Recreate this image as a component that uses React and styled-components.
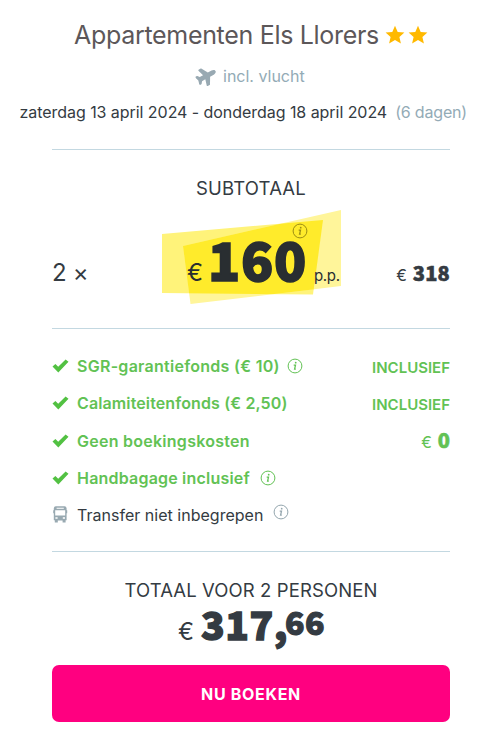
import React from "react";
import styled, { createGlobalStyle } from "styled-components";
import { FaPlane } from "react-icons/fa";

const GlobalStyle = createGlobalStyle`
  * { box-sizing: border-box; }
  body {
    margin: 0;
    background: #fff;
    color: #343b42;
    font-family: Inter, "Liberation Sans", sans-serif;
    font-size: 16px;
  }
`;

const Page = styled.main`
  width: 500px;
  height: 738px;
  overflow: hidden;
  display: flex;
  flex-direction: column;
`;

const Header = styled.header`
  height: 149px;
  padding-top: 20px;
  white-space: nowrap;
`;

const Title = styled.h1`
  display: flex;
  align-items: center;
  height: 30px;
  margin: 0 0 0 74px;
  color: #5c5759;
  font-size: 25px;
  font-weight: 400;
  line-height: 30px;
  letter-spacing: -0.31px;
`;

const Stars = styled.span`
  display: flex;
  gap: 3px;
  margin-left: 6px;
`;

const Flight = styled.div`
  display: flex;
  align-items: center;
  gap: 6px;
  height: 20px;
  margin: 16px 0 0 196px;
  color: #93abb6;
  line-height: 20px;
`;

const PlaneIcon = styled(FaPlane)`
  width: 21px;
  height: 20px;
  color: #98a9b2;
  transform: rotate(-29deg);
`;

const Dates = styled.div`
  display: flex;
  height: 20px;
  margin: 16px 0 0 19.5px;
  line-height: 20px;
  letter-spacing: -0.05px;
`;

const Days = styled.span`
  margin-left: 8px;
  color: #93abb6;
  letter-spacing: -0.18px;
`;

const Section = styled.section`
  height: ${(p) => p.$height}px;
  margin: 0 50px 0 52px;
  border-top: 1px solid #c3d8e1;
`;

const Caption = styled.h2`
  margin: 0;
  padding-top: ${(p) => p.$top}px;
  font-size: 18.5px;
  font-weight: 400;
  line-height: 27px;
  letter-spacing: ${(p) => p.$spacing}px;
  text-align: center;
`;

const PriceRow = styled.div`
  display: flex;
  align-items: baseline;
  height: 104px;
  padding-top: 18px;
`;

const Quantity = styled.span`
  width: 110px;
  font-size: 24px;
  letter-spacing: -0.3px;
`;

const Price = styled.div`
  position: relative;
  display: flex;
  align-items: baseline;
  width: 179px;
  padding-left: 25px;
  color: #292e31;
  line-height: 76px;
`;

const Highlight = styled.svg`
  position: absolute;
  left: 0;
  top: -10px;
  z-index: -1;
`;

const PriceInfo = styled.span`
  position: absolute;
  left: 130px;
  top: 3px;
  display: flex;
  color: #9c8d13;
`;

const Euro = styled.span`
  font-size: ${(p) => p.$size}px;
`;

const Amount = styled.strong`
  margin-left: ${(p) => p.$gap}px;
  font-family: "Noto Sans CJK SC", sans-serif;
  font-size: ${(p) => p.$size}px;
  font-weight: 900;
  letter-spacing: ${(p) => p.$spacing || 0}px;
  -webkit-text-stroke: ${(p) => p.$stroke}px currentColor;
`;

const PerPerson = styled.span`
  margin-left: 7px;
  font-size: 15px;
  letter-spacing: -0.3px;
`;

const RowTotal = styled.span`
  margin-left: auto;
`;

const List = styled.ul`
  margin: 0;
  padding: 18.4px 0 0;
  list-style: none;
`;

const Item = styled.li`
  display: flex;
  align-items: center;
  height: ${(p) => (p.$muted ? 36 : 37.3)}px;
  color: ${(p) => (p.$muted ? "#343b42" : "#62c254")};
  font-weight: ${(p) => (p.$muted ? 400 : 600)};
  white-space: nowrap;
`;

const ItemIcon = styled.span`
  display: flex;
  width: 25px;
  color: ${(p) => (p.$muted ? "#98a9b1" : "#52c142")};
`;

const Label = styled.span`
  letter-spacing: ${(p) => p.$spacing}px;
`;

const InfoSlot = styled.span`
  display: flex;
  margin-left: ${(p) => p.$gap}px;
  margin-top: ${(p) => p.$shift || 0}px;
  color: ${(p) => (p.$muted ? "#94a6ae" : "#62c254")};
`;

const Included = styled.span`
  margin-left: auto;
  padding-top: 2px;
  font-size: 15px;
`;

const Free = styled.span`
  margin-left: auto;
  font-weight: 400;
  line-height: 20px;
`;

const Total = styled.div`
  display: flex;
  align-items: baseline;
  height: 61px;
  padding-left: 126px;
  line-height: 38px;
`;

const Cents = styled(Amount)`
  align-self: flex-start;
  line-height: 34px;
`;

const BookButton = styled.button`
  display: block;
  width: 398px;
  height: 57px;
  border: 0;
  border-radius: 7px;
  background: #ff0080;
  color: #fff;
  font: 700 16px Inter, sans-serif;
  letter-spacing: 0.68px;
`;

const Star = () => (
  <svg width="20" height="20" viewBox="0 0 20 20" fill="#ffb900">
    <path d="M10 .7 12.7 6.9 19.4 7.5 14.4 12 15.9 18.6 10 15.1 4.1 18.6 5.6 12 .6 7.5 7.3 6.9Z" />
  </svg>
);

const Check = () => (
  <svg width="17" height="14" viewBox="0 0 17 14" fill="currentColor">
    <path d="M.5 7.6 3.4 4.9 6.2 7.7 13.6.5 16.5 2.8 6.3 13.4Z" />
  </svg>
);

const Bus = () => (
  <svg width="16" height="17" viewBox="0 0 16 17" fill="currentColor" fillRule="evenodd">
    <path d="M3.8.3h8.8q1.8 0 2 2v1.9h.6v3h-.6v7h-1v2.2h-3v-2H5.8v2h-3v-2.2h-1v-7h-.6v-3h.6V2.3q.2-2 2-2ZM4.6 1.8v.9h7.2v-.9ZM3.2 4.2v5.3h10V4.2ZM3.4 11.3v1.5h2.2v-1.5ZM10.8 11.3v1.5H13v-1.5Z" />
  </svg>
);

const Info = () => (
  <svg width="16" height="16" viewBox="0 0 16 16" fill="none" stroke="currentColor">
    <circle cx="8" cy="8" r="6.9" strokeWidth="1" />
    <circle cx="8.7" cy="4.7" r=".9" fill="currentColor" stroke="none" />
    <path d="M6.7 7.1h1.8L7.6 11.2h1.2" strokeWidth="1.3" />
  </svg>
);

const items = [
  { text: "SGR-garantiefonds (€ 10)", spacing: 0.27, gap: 7, included: true },
  { text: "Calamiteitenfonds (€ 2,50)", spacing: 0.12, included: true },
  { text: "Geen boekingskosten", spacing: 0.26, free: true },
  { text: "Handbagage inclusief", spacing: 0.2, gap: 10 },
  { text: "Transfer niet inbegrepen", spacing: 0.02, gap: 10, muted: true, shift: -5 },
];

export default function App() {
  return (
    <Page>
      <GlobalStyle />
      <Header>
        <Title>
          Appartementen Els Llorers
          <Stars><Star /><Star /></Stars>
        </Title>
        <Flight><PlaneIcon />incl. vlucht</Flight>
        <Dates>
          zaterdag 13 april 2024 - donderdag 18 april 2024
          <Days>(6 dagen)</Days>
        </Dates>
      </Header>

      <Section $height={179}>
        <Caption $top={25} $spacing={0.18}>SUBTOTAAL</Caption>
        <PriceRow>
          <Quantity>2 ×</Quantity>
          <Price>
            <Highlight width="179" height="96" viewBox="0 0 179 96">
              <defs>
                <clipPath id="overlap">
                  <path d="M0 24 161 10 151 84.5 0 83Z" />
                </clipPath>
              </defs>
              <path d="M0 24 161 10 151 84.5 0 83Z" fill="#fff37a" />
              <path d="M21 36 179 0V76L28.5 94Z" fill="#fff59a" />
              <path d="M21 36 179 0V76L28.5 94Z" fill="#ffeb2b" clipPath="url(#overlap)" />
            </Highlight>
            <PriceInfo><Info /></PriceInfo>
            <Euro $size={24}>€</Euro>
            <Amount $size={53} $gap={5} $spacing={0.7} $stroke={1.6}>160</Amount>
            <PerPerson>p.p.</PerPerson>
          </Price>
          <RowTotal>
            <Euro $size={16}>€</Euro>
            <Amount $size={20} $gap={6} $spacing={0.2} $stroke={0.6}>318</Amount>
          </RowTotal>
        </PriceRow>
      </Section>

      <Section $height={223}>
        <List>
          {items.map((item) => (
            <Item key={item.text} $muted={item.muted}>
              <ItemIcon $muted={item.muted}>{item.muted ? <Bus /> : <Check />}</ItemIcon>
              <Label $spacing={item.spacing}>{item.text}</Label>
              {item.gap && (
                <InfoSlot $gap={item.gap} $shift={item.shift} $muted={item.muted}><Info /></InfoSlot>
              )}
              {item.included && <Included>INCLUSIEF</Included>}
              {item.free && (
                <Free>
                  <Euro $size={16}>€</Euro>
                  <Amount $size={20} $gap={6} $stroke={0.6}>0</Amount>
                </Free>
              )}
            </Item>
          ))}
        </List>
      </Section>

      <Section $height={187}>
        <Caption $top={25} $spacing={0.1}>TOTAAL VOOR 2 PERSONEN</Caption>
        <Total>
          <Euro $size={24}>€</Euro>
          <Amount $size={39} $gap={7} $spacing={0.5} $stroke={1.3}>317,</Amount>
          <Cents $size={32} $gap={-3} $spacing={0.6} $stroke={1.1}>66</Cents>
        </Total>
        <BookButton>NU BOEKEN</BookButton>
      </Section>
    </Page>
  );
}
